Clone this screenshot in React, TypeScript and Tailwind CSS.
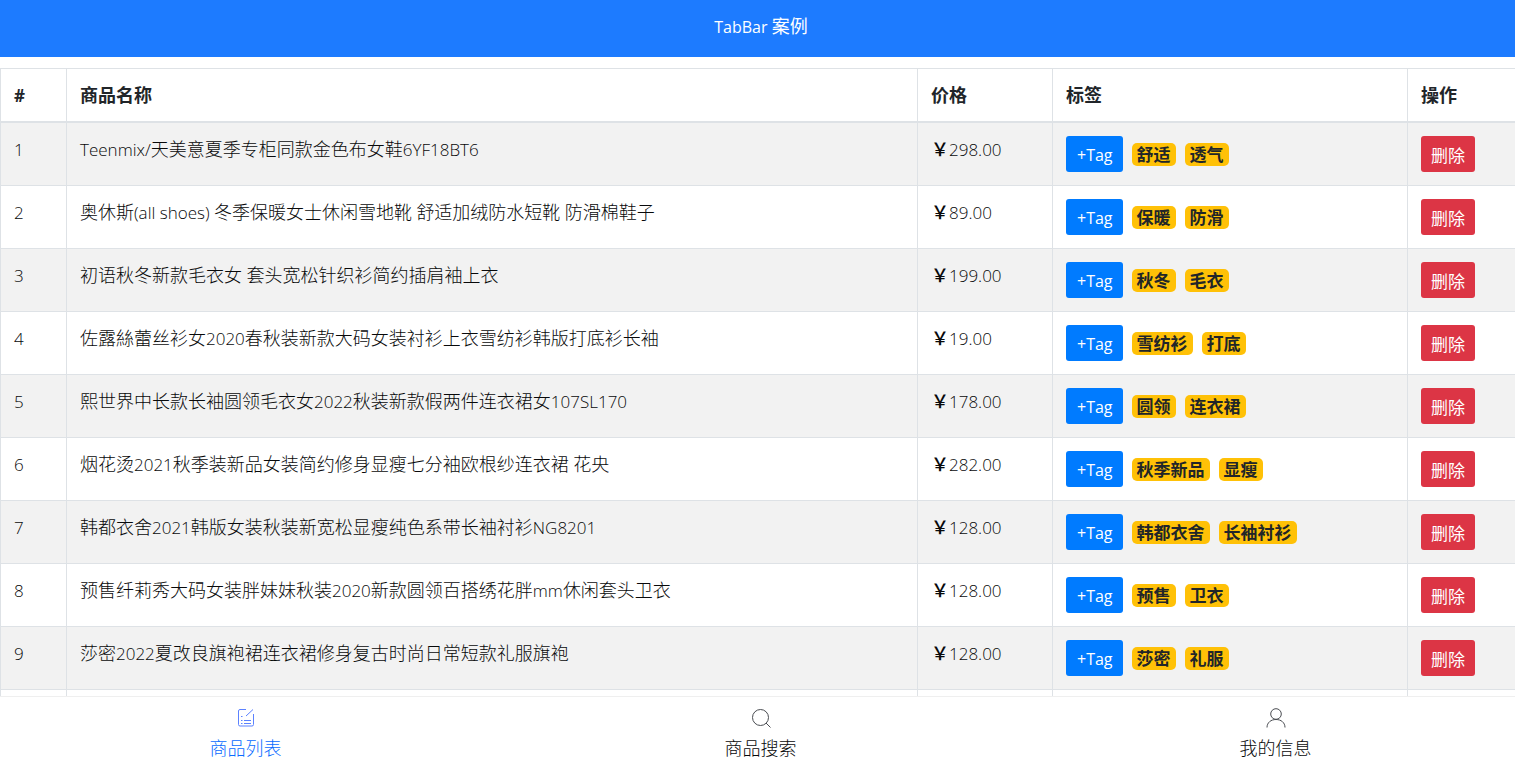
import React from 'react';

type Product = { id: number; name: string; price: string; tags: string[] };

const products: Product[] = [
  { id: 1, name: 'Teenmix/天美意夏季专柜同款金色布女鞋6YF18BT6', price: '298.00', tags: ['舒适', '透气'] },
  { id: 2, name: '奥休斯(all shoes) 冬季保暖女士休闲雪地靴 舒适加绒防水短靴 防滑棉鞋子', price: '89.00', tags: ['保暖', '防滑'] },
  { id: 3, name: '初语秋冬新款毛衣女 套头宽松针织衫简约插肩袖上衣', price: '199.00', tags: ['秋冬', '毛衣'] },
  { id: 4, name: '佐露絲蕾丝衫女2020春秋装新款大码女装衬衫上衣雪纺衫韩版打底衫长袖', price: '19.00', tags: ['雪纺衫', '打底'] },
  { id: 5, name: '熙世界中长款长袖圆领毛衣女2022秋装新款假两件连衣裙女107SL170', price: '178.00', tags: ['圆领', '连衣裙'] },
  { id: 6, name: '烟花烫2021秋季装新品女装简约修身显瘦七分袖欧根纱连衣裙 花央', price: '282.00', tags: ['秋季新品', '显瘦'] },
  { id: 7, name: '韩都衣舍2021韩版女装秋装新宽松显瘦纯色系带长袖衬衫NG8201', price: '128.00', tags: ['韩都衣舍', '长袖衬衫'] },
  { id: 8, name: '预售纤莉秀大码女装胖妹妹秋装2020新款圆领百搭绣花胖mm休闲套头卫衣', price: '128.00', tags: ['预售', '卫衣'] },
  { id: 9, name: '莎密2022夏改良旗袍裙连衣裙修身复古时尚日常短款礼服旗袍', price: '128.00', tags: ['莎密', '礼服'] },
];

const cell = 'border border-[#dee2e6] px-[13px] align-top font-light text-[#08090a]';
const head = 'border border-b-2 border-[#dee2e6] px-[13px] pt-[13px] pb-3 text-left font-bold';

/* Latin runs are set one step smaller than the Chinese text around them. */
function Mixed({ text }: { text: string }) {
  return (
    <>
      {text.split(/([\x20-\x7e]+)/).map((run, i) =>
        i % 2 ? <span key={i} className="text-[17px] leading-none">{run}</span> : run,
      )}
    </>
  );
}

function ListIcon() {
  return (
    <svg className="h-5 w-5" viewBox="0 0 20 20" fill="none" stroke="#5c82ff" strokeWidth="1">
      <path d="M10 1.500H4A1.500 1.500 0 0 0 2.500 3v13.500A1.500 1.500 0 0 0 4 18h12a1.500 1.500 0 0 0 1.500-1.500V6M10 8l7-6.500M5 8.500h1.500M5 12.500h1.500M8 12.500h7M5 15.500h1.500M8 15.500h7" />
    </svg>
  );
}

function SearchIcon() {
  return (
    <svg className="h-5 w-5" viewBox="0 0 20 20" fill="none" stroke="#4a4d52" strokeWidth="1">
      <circle cx="9.500" cy="9.500" r="8" />
      <path d="M15 15l4.500 4.500" />
    </svg>
  );
}

function UserIcon() {
  return (
    <svg className="h-5 w-5" viewBox="0 0 20 20" fill="none" stroke="#4a4d52" strokeWidth="1">
      <circle cx="10" cy="6" r="5.300" />
      <path d="M1 19.500C1 14.500 5 11.500 10 11.500s9 3 9 8" />
    </svg>
  );
}

const tabs = [
  { label: '商品列表', icon: <ListIcon />, active: true },
  { label: '商品搜索', icon: <SearchIcon />, active: false },
  { label: '我的信息', icon: <UserIcon />, active: false },
];

export default function App() {
  return (
    <div className="flex h-screen flex-col overflow-hidden bg-white font-['Open_Sans','Noto_Sans_CJK_SC',sans-serif] text-[18px] leading-[27px] text-[#212529]">
      <header className="shrink-0 bg-[#1d7bff] pt-[13px] pb-[17px] pl-[7px] text-center text-white">
        <h1><span className="text-base leading-none">TabBar </span>案例</h1>
      </header>

      <main className="-mr-2 min-h-0 flex-1 overflow-hidden pt-[11px]">
        <table className="w-full table-fixed border-collapse">
          <colgroup>
            <col className="w-[66px]" />
            <col />
            <col className="w-[135px]" />
            <col className="w-[355px]" />
            <col className="w-[115px]" />
          </colgroup>
          <thead>
            <tr>
              <th scope="col" className={head}><Mixed text="#" /></th>
              <th scope="col" className={head}>商品名称</th>
              <th scope="col" className={head}>价格</th>
              <th scope="col" className={head}>标签</th>
              <th scope="col" className={head}>操作</th>
            </tr>
          </thead>
          <tbody>
            {products.map((p) => (
              <tr key={p.id} className="h-[63px] odd:bg-[#f2f2f2]">
                <td className={`${cell} pt-[13px]`}><Mixed text={String(p.id)} /></td>
                <td className={`${cell} pt-[13px]`}><Mixed text={p.name} /></td>
                <td className={`${cell} pt-[13px]`}><span className="font-medium">￥</span><Mixed text={p.price} /></td>
                <td className={`${cell} py-[13px]`}>
                  <div className="flex items-center gap-[9px]">
                    <button type="button" className="h-9 rounded-[3px] bg-[#007bff] pt-0.5 pr-2.5 pl-[11px] text-base font-normal text-white">+Tag</button>
                    {p.tags.map((t) => (
                      <span key={t} className="h-[23px] rounded-[5px] bg-[#ffc107] px-[5px] text-[17px] leading-6 font-bold text-[#212529]">{t}</span>
                    ))}
                  </div>
                </td>
                <td className={`${cell} py-[13px]`}>
                  <button type="button" className="block h-9 rounded-[3px] bg-[#dc3545] px-2.5 pt-0.5 text-[17px] font-normal text-white">删除</button>
                </td>
              </tr>
            ))}
            <tr className="h-[63px]">
              <td className={cell} /><td className={cell} /><td className={cell} /><td className={cell} /><td className={cell} />
            </tr>
          </tbody>
        </table>
      </main>

      <nav className="-mr-[18px] -ml-3 grid h-[65px] shrink-0 grid-cols-3 border-t border-[#efefef] bg-white font-light text-[#08090a]">
        {tabs.map((t) => (
          <a key={t.label} href="#" className={`flex flex-col items-center gap-[7px] pt-[11px] ${t.active ? 'text-[#0a6cff]' : ''}`}>
            {t.icon}
            <span>{t.label}</span>
          </a>
        ))}
      </nav>
    </div>
  );
}
